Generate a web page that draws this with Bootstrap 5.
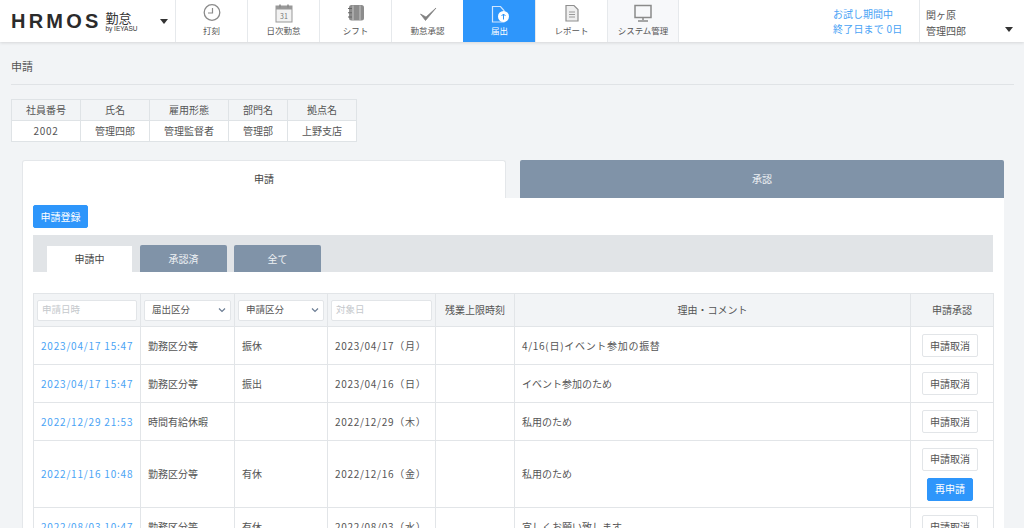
<!DOCTYPE html>
<html lang="ja"><head><meta charset="utf-8"><title>申請</title>
<link rel="stylesheet" href="https://cdn.jsdelivr.net/npm/bootstrap@5.3.0/dist/css/bootstrap.min.css">
<style>
html,body{height:528px;overflow:hidden}
body{background:#f2f4f6;color:#555;font-family:"Noto Sans CJK JP","Noto Sans",sans-serif;font-size:10px;line-height:1.2}
.topbar{height:42px;background:#fff;box-shadow:0 1px 3px rgba(0,0,0,.12);position:relative}
.brand{width:175px;padding-left:11px;color:#333}
.logo-word{font:700 20px "Liberation Sans",sans-serif;letter-spacing:3.2px;color:#2b2b2b}
.logo-sub{margin-left:4px;line-height:1}
.logo-kin{font-size:13px;display:block;line-height:15px}
.logo-by{font:500 6.5px "Liberation Sans",sans-serif;display:block}
.caret-down{width:0;height:0;border-left:4px solid transparent;border-right:4px solid transparent;border-top:5px solid #333;display:block}
.brand .caret-down{margin-left:auto;margin-right:7px}
.nav-cell{width:72px;height:42px;border-left:1px solid #e6e9ec;font-size:8.5px;color:#555;text-decoration:none;padding-top:3px;gap:2px}
.nav-cell svg{display:block;width:22px;height:20px}
.nav-cell.on{background:#2e96fb;color:#fff;border-left-color:#2e96fb}
.nav-cell.sys{background:#f7f8fa;border-right:1px solid #e6e9ec}
.trial{color:#4aa3f5;margin-left:auto;width:86px;padding-left:16px;text-align:left;line-height:15px;font-size:10px;white-space:nowrap}
.trial .num{letter-spacing:.2px}
.userbox{width:105px;border-left:1px solid #e6e9ec;padding:7px 0 0 6px;line-height:16px;position:relative}
.userbox .caret-down{position:absolute;right:11px;top:27px}
.page-ttl{margin:0 10px 0 11px;height:43px;line-height:49px;font-size:11px;border-bottom:1px solid #e0e3e6}
.info-grid{margin:14px 0 0 11px;width:346px;table-layout:fixed;border-collapse:collapse;font-size:10px;text-align:center}
.info-grid th,.info-grid td{border:1px solid #dfe3e6;font-weight:400;height:21px;padding:0;background:#fff}
.info-grid th{background:#f2f4f6}
.tabs-wrap{margin:18px 20px 0 22px}
.big-tab{height:38px;font-size:10px}
.big-tab.sel{flex:0 0 484px;background:#fff;border:1px solid #e4e7ea;border-bottom:0;border-radius:3px 3px 0 0;color:#444;padding-bottom:2px}
.big-tab.off{flex:0 0 484px;margin-left:14px;background:#8093a8;color:#eef1f4;border-radius:2px 2px 0 0}
.panel-body{background:#fff;border-left:1px solid #e4e7ea;padding:7px 11px 0 10px;height:340px;overflow:hidden}
.btn-blue{background:#2e96fb;border:1px solid #2e96fb;color:#fff;font-size:10px;border-radius:2px;padding:0;line-height:1;display:inline-flex;align-items:center;justify-content:center}
.btn-reg{width:55px;height:23px}
.subbar{background:#e1e4e7;height:37px;margin-top:7px;padding:10px 0 0 14px}
.sub-tab{width:87px;height:27px;font-size:10px;background:#8093a8;color:#eef1f4;border-radius:2px 2px 0 0;margin-left:7px}
.sub-tab.sel{width:85px;height:26px;margin-top:1px;margin-left:0;background:#fff;color:#444;border-radius:0}
.sub-tab.sel + .sub-tab{margin-left:8px}
.req-table{width:960px;margin:21px 0 0;table-layout:fixed;border-collapse:collapse;font-size:10px}
.req-table th,.req-table td{border:1px solid #e2e5e8;vertical-align:middle;padding:0 7px;font-weight:400;color:#555;background:#fff}
.req-table th{background:#f2f4f6;height:33px;text-align:center;padding:0 3px}
.req-table .r{height:38px}
.req-table .rr{height:67px}
.req-table a{color:#4aa3f5;text-decoration:none;letter-spacing:.8px;white-space:nowrap}
.num{letter-spacing:.7px}
.fake-in,.fake-sel{height:21px;width:100%;border:1px solid #e2e5e8;border-radius:2px;background:#fff;font-size:9.5px;padding:0 4px;display:flex;align-items:center;text-align:left}
.fake-in{color:#c4c8cc}
.fake-sel{color:#555;padding-left:7px;justify-content:space-between}
.fake-sel svg{width:8px;height:6px;flex:none}
.btn-cancel{width:56px;height:23px;background:#fff;border:1px solid #e2e5e8;border-radius:2px;color:#555;font-size:10px;padding:0;display:flex;align-items:center;justify-content:center;margin-left:4px}
.btn-re{width:46px;height:23px;margin:7px 0 0 9px;display:flex}
</style></head><body>
<header class="topbar d-flex">
 <div class="brand d-flex align-items-center">
  <span class="logo-word">HRMOS</span>
  <span class="logo-sub"><span class="logo-kin">勤怠</span><span class="logo-by">by IEYASU</span></span>
  <span class="caret-down"></span>
 </div>
 <a class="nav-cell d-flex flex-column align-items-center" href="#"><svg viewBox="0 0 22 20"><circle cx="11" cy="9.500" r="7.800" fill="none" stroke="#8a8a8a" stroke-width="1.300"/><path d="M11.500 5v5H7" fill="none" stroke="#8a8a8a" stroke-width="1.200"/></svg><span>打刻</span></a>
 <a class="nav-cell d-flex flex-column align-items-center" href="#"><svg viewBox="0 0 22 20"><rect x="3" y="3" width="16" height="16" fill="#f2f2f2" stroke="#999"/><rect x="3" y="3" width="16" height="3.500" fill="#999"/><path d="M7 1.500v3M15 1.500v3" stroke="#888" stroke-width="1.500"/><text x="11" y="15.500" font-size="7" text-anchor="middle" fill="#777">31</text></svg><span>日次勤怠</span></a>
 <a class="nav-cell d-flex flex-column align-items-center" href="#"><svg viewBox="0 0 22 20"><rect x="4" y="2" width="15" height="15.500" rx="2.500" fill="#8c8c8c"/><path d="M8 2.500v14.500M15 2.500v14.500" stroke="#d5d5d5" stroke-width=".8"/><path d="M3 5.500h4M3 9.800h4M3 14h4" stroke="#666" stroke-width="1.100"/></svg><span>シフト</span></a>
 <a class="nav-cell d-flex flex-column align-items-center" href="#"><svg viewBox="0 0 22 20"><path d="M3.500 11l5 6.500L19 5l-10 9z" fill="#808080" stroke="#808080" stroke-width=".7" stroke-linejoin="round"/></svg><span>勤怠承認</span></a>
 <a class="nav-cell on d-flex flex-column align-items-center" href="#"><svg viewBox="0 0 22 20"><path d="M3.500 3.500h8l3.500 4V19h-11.500z" fill="none" stroke="#cfe6ff" stroke-width="1.200"/><circle cx="14.500" cy="13.500" r="5.500" fill="#fff"/><path d="M14.500 16.500v-5.500M12.500 13l2-2 2 2" stroke="#2e96fb" fill="none"/></svg><span>届出</span></a>
 <a class="nav-cell d-flex flex-column align-items-center" href="#"><svg viewBox="0 0 22 20"><path d="M5 2.500h8l4 4V18H5z" fill="#efefef" stroke="#8f8f8f" stroke-width="1.200"/><path d="M8 9h6M8 11.500h6M8 14h6" stroke="#999"/></svg><span>レポート</span></a>
 <a class="nav-cell sys d-flex flex-column align-items-center" href="#"><svg viewBox="0 0 22 20"><rect x="3" y="2.500" width="16" height="12" fill="#f7f8fa" stroke="#8a8a8a" stroke-width="1.500"/><path d="M11 15v2M6 18h10" stroke="#8a8a8a" stroke-width="1.500"/></svg><span>システム管理</span></a>
 <div class="trial d-flex flex-column justify-content-center"><span>お試し期間中</span><span class="num">終了日まで 0日</span></div>
 <div class="userbox ms-3"><div>関ヶ原</div><div>管理四郎</div><span class="caret-down"></span></div>
</header>
<main>
 <h1 class="page-ttl fw-normal">申請</h1>
 <table class="info-grid"><colgroup><col style="width:69px"><col style="width:69px"><col style="width:79px"><col style="width:59px"><col style="width:69px"></colgroup>
  <tr><th>社員番号</th><th>氏名</th><th>雇用形態</th><th>部門名</th><th>拠点名</th></tr>
  <tr><td class="num">2002</td><td>管理四郎</td><td>管理監督者</td><td>管理部</td><td>上野支店</td></tr>
 </table>
 <section class="tabs-wrap">
  <div class="d-flex">
   <div class="big-tab sel d-flex align-items-center justify-content-center">申請</div>
   <div class="big-tab off d-flex align-items-center justify-content-center">承認</div>
  </div>
  <div class="panel-body">
   <button class="btn-blue btn-reg" type="button">申請登録</button>
   <div class="subbar d-flex">
    <div class="sub-tab sel d-flex align-items-center justify-content-center">申請中</div>
    <div class="sub-tab d-flex align-items-center justify-content-center">承認済</div>
    <div class="sub-tab d-flex align-items-center justify-content-center">全て</div>
   </div>
   <table class="req-table">
    <colgroup><col style="width:107px"><col style="width:94px"><col style="width:93px"><col style="width:108px"><col style="width:79px"><col style="width:396px"><col style="width:83px"></colgroup>
    <tr>
     <th><div class="fake-in">申請日時</div></th>
     <th><div class="fake-sel">届出区分<svg viewBox="0 0 8 6"><path d="M1 1.500l3 3 3-3" fill="none" stroke="#6b7c93" stroke-width="1.200"/></svg></div></th>
     <th><div class="fake-sel">申請区分<svg viewBox="0 0 8 6"><path d="M1 1.500l3 3 3-3" fill="none" stroke="#6b7c93" stroke-width="1.200"/></svg></div></th>
     <th><div class="fake-in">対象日</div></th>
     <th>残業上限時刻</th><th>理由・コメント</th><th>申請承認</th>
    </tr>
    <tr class="r"><td><a href="#">2023/04/17 15:47</a></td><td>勤務区分等</td><td>振休</td><td class="num">2023/04/17（月）</td><td></td><td class="num">4/16(日)イベント参加の振替</td><td><button class="btn-cancel" type="button">申請取消</button></td></tr>
    <tr class="r"><td><a href="#">2023/04/17 15:47</a></td><td>勤務区分等</td><td>振出</td><td class="num">2023/04/16（日）</td><td></td><td>イベント参加のため</td><td><button class="btn-cancel" type="button">申請取消</button></td></tr>
    <tr class="r"><td><a href="#">2022/12/29 21:53</a></td><td>時間有給休暇</td><td></td><td class="num">2022/12/29（木）</td><td></td><td>私用のため</td><td><button class="btn-cancel" type="button">申請取消</button></td></tr>
    <tr class="rr"><td><a href="#">2022/11/16 10:48</a></td><td>勤務区分等</td><td>有休</td><td class="num">2022/12/16（金）</td><td></td><td>私用のため</td><td><button class="btn-cancel" type="button">申請取消</button><button class="btn-blue btn-re" type="button">再申請</button></td></tr>
    <tr class="r"><td><a href="#">2022/08/03 10:47</a></td><td>勤務区分等</td><td>有休</td><td class="num">2022/08/03（水）</td><td></td><td>宜しくお願い致します-</td><td><button class="btn-cancel" type="button">申請取消</button></td></tr>
   </table>
  </div>
 </section>
</main>
<script src="https://cdn.jsdelivr.net/npm/bootstrap@5.3.0/dist/js/bootstrap.bundle.min.js"></script>
</body></html>
